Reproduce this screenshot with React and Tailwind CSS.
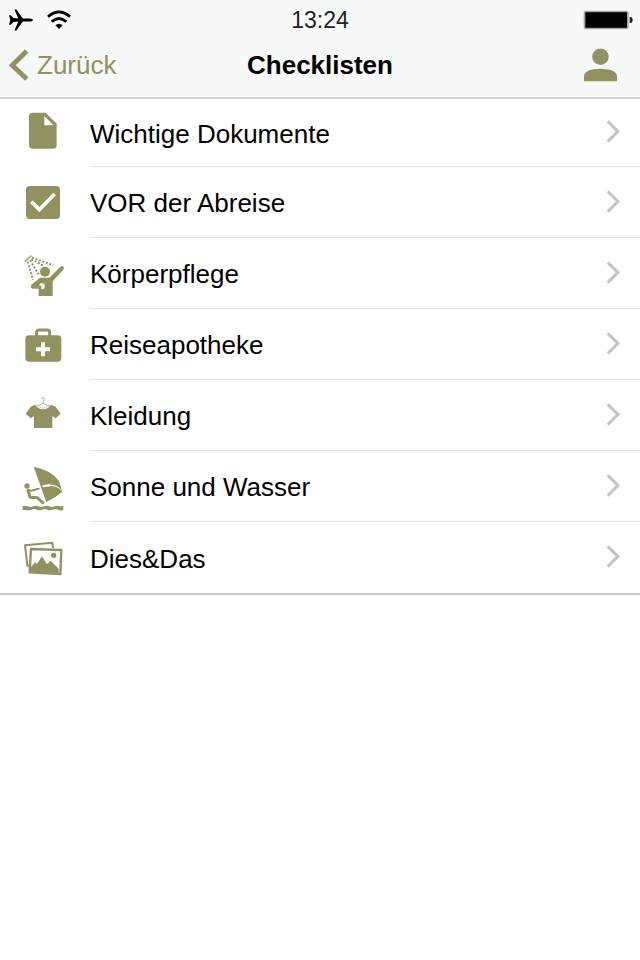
import { useState } from "react";

function DocumentIcon() {
  return (
    <svg viewBox="27 27 144 144" className="w-12 h-12" fill="currentColor" aria-hidden="true">
      <path
        fillRule="evenodd"
        d="M68 38H107L140 71V135Q140 146 129 146H68Q57 146 57 135V49Q57 38 68 38ZM103 48V76H131Z"
      />
    </svg>
  );
}

function CheckIcon() {
  return (
    <svg viewBox="27 27 144 144" className="w-12 h-12" aria-hidden="true">
      <rect x="48" y="48" width="102" height="99" rx="11" fill="currentColor" />
      <path d="M64 95L88 119L134 72" fill="none" stroke="white" strokeWidth="11" />
    </svg>
  );
}

function ShowerIcon() {
  return (
    <svg viewBox="27 30 144 144" className="w-12 h-12" fill="currentColor" aria-hidden="true">
      <path d="M43 62L63 45L66 49L47 67Z" opacity="0.8" />
      <g fill="none" stroke="currentColor" strokeWidth="6" strokeDasharray="6 5">
        <path d="M66 53L130 76" />
        <path d="M64 58L100 77" />
        <path d="M60 61L86 103" />
        <path d="M53 65L69 119" />
      </g>
      <circle cx="105" cy="95" r="15" />
      <path
        fillRule="evenodd"
        d="M64 134L90 113H118L151 80Q157 76 161 81Q163 85 159 90L128 124V168H86V146H66Q60 141 64 134ZM91 130L87 137H94V148H100Q104 147 104 142V135Q103 130 98 130Z"
      />
    </svg>
  );
}

function FirstAidIcon() {
  return (
    <svg viewBox="27 27 144 144" className="w-12 h-12" aria-hidden="true">
      <path d="M80 73V61Q80 54 87 54H112Q119 54 119 61V73" fill="none" stroke="currentColor" strokeWidth="9" />
      <rect x="46" y="70" width="108" height="79" rx="11" fill="currentColor" />
      <path d="M99 91V133M78 112H120" stroke="white" strokeWidth="12" />
    </svg>
  );
}

function ShirtIcon() {
  return (
    <svg viewBox="27 36 144 144" className="w-12 h-12" aria-hidden="true">
      <path
        d="M95 58Q95 53 99 53Q104 54 103 59Q99 62 99 69M99 69Q94 75 82 77M99 69Q105 75 117 77"
        fill="none"
        stroke="currentColor"
        strokeWidth="3"
        opacity="0.7"
      />
      <path
        d="M76 74Q82 87 99 88Q116 87 122 74L137 80L152 101L137 115L127 108V144H72V108L62 115L47 101L62 80Z"
        fill="currentColor"
      />
      <path d="M75 73Q82 83 99 84Q116 83 123 73" fill="none" stroke="currentColor" strokeWidth="2" opacity="0.5" />
    </svg>
  );
}

function SurfIcon() {
  return (
    <svg viewBox="27 24 144 144" className="w-12 h-12" fill="currentColor" aria-hidden="true">
      <path d="M71 35Q126 47 145 76Q151 86 156 111Q141 124 109 141Z" />
      <path d="M96 92Q122 82 145 96Q153 101 155 109Q142 92 122 94Q111 96 99 97Z" fill="white" />
      <circle cx="51" cy="93" r="8" />
      <g fill="none" stroke="currentColor" strokeLinecap="round" strokeLinejoin="round">
        <path d="M54 106L64 107L86 101" strokeWidth="6" />
        <path d="M54 106L60 127L82 128L98 143" strokeWidth="9" />
      </g>
      <path d="M38 154Q46 150 54 154T70 154T86 154T102 154T118 154T134 154T150 154L160 153V165Q151 168 144 164T128 164T112 164T96 164T80 164T64 164T48 164L38 166Z" />
    </svg>
  );
}

function PhotosIcon() {
  return (
    <svg viewBox="27 12 144 144" className="w-12 h-12" fill="none" stroke="currentColor" aria-hidden="true">
      <path d="M58 107L52 107L45 46L127 38L129 54" strokeWidth="6" strokeLinejoin="round" />
      <path d="M63 57L154 60L151 132L59 127Z" strokeWidth="7" strokeLinejoin="round" />
      <circle cx="131" cy="76" r="8" fill="currentColor" stroke="none" />
      <path d="M63 112L74 97L81 101L96 79L111 103L122 92L146 116V129L62 125Z" fill="currentColor" stroke="none" />
    </svg>
  );
}

const checklists = [
  { id: "documents", title: "Wichtige Dokumente", icon: DocumentIcon },
  { id: "before", title: "VOR der Abreise", icon: CheckIcon },
  { id: "care", title: "Körperpflege", icon: ShowerIcon },
  { id: "pharmacy", title: "Reiseapotheke", icon: FirstAidIcon },
  { id: "clothes", title: "Kleidung", icon: ShirtIcon },
  { id: "water", title: "Sonne und Wasser", icon: SurfIcon },
  { id: "misc", title: "Dies&Das", icon: PhotosIcon },
];

function StatusBar() {
  return (
    <div className="grid grid-cols-[1fr_auto_1fr] items-center h-10 px-[7px]">
      <div className="flex items-center gap-[14px] pl-0.5">
        <svg viewBox="0 0 75 66" className="w-6 h-6" fill="currentColor" aria-hidden="true">
          <path d="M0 18H5L14 27L29 28L17 0H23L43 28H64Q75 29 75 33Q75 37 64 38H43L23 66H17L29 38L14 39L5 48H0L4 33Z" />
        </svg>
        <svg viewBox="0 0 72 60" className="w-6 h-5" fill="none" stroke="currentColor" aria-hidden="true">
          <path d="M3 20Q36 -8 69 20" strokeWidth="8" />
          <path d="M14 35Q36 16 58 35" strokeWidth="8" />
          <path d="M25 46Q36 36 47 46L36 57Z" fill="currentColor" stroke="none" />
        </svg>
      </div>
      <span className="text-center text-[23px] leading-6 text-[#222222]">13:24</span>
      <svg viewBox="0 0 150 60" className="justify-self-end w-[50px] h-5" aria-hidden="true">
        <rect x="2" y="2" width="135" height="56" rx="7" fill="#a3a0a1" />
        <rect x="7" y="7" width="125" height="46" rx="3" fill="black" />
        <path d="M140 20Q149 21 149 30T140 40Z" fill="#222222" />
      </svg>
    </div>
  );
}

export default function App() {
  const [selected, setSelected] = useState(null);

  return (
    <div className="min-h-screen bg-white text-black font-['Liberation_Sans',Arial,sans-serif]">
      {/* Header */}
      <header className="bg-[#f7f9f8] border-b-2 border-[#d2d3d3]">
        <StatusBar />
        <nav className="grid grid-cols-[1fr_auto_1fr] items-center h-[57px] px-[9px] pb-2">
          <a href="#" className="flex items-center gap-2 text-[26px] leading-8 text-[#929160]">
            <svg viewBox="0 0 60 99" className="w-5 h-8" fill="none" stroke="currentColor" aria-hidden="true">
              <path d="M54 6L9 50L54 93" strokeWidth="15" />
            </svg>
            Zurück
          </a>
          <h1 className="text-[26px] leading-8 font-bold">Checklisten</h1>
          <button type="button" aria-label="Profil" className="justify-self-end mr-[14px] text-[#929160]">
            <svg viewBox="0 0 100 102" className="w-[33px] h-9" fill="currentColor" aria-hidden="true">
              <circle cx="50" cy="26" r="25" />
              <path d="M0 100V83Q5 62 50 62T100 83V100Z" />
            </svg>
          </button>
        </nav>
      </header>

      {/* Checklists */}
      <ul className="border-b-2 border-[#cbcbcd]">
        {checklists.map((item, i) => {
          const Icon = item.icon;
          return (
            <li key={item.id}>
              <button
                type="button"
                onClick={() => setSelected(item.id)}
                aria-pressed={selected === item.id}
                className={`flex items-stretch w-full pl-[19px] text-left ${i === 0 ? "h-[68px]" : "h-[71px]"}`}
              >
                <span className="flex items-center text-[#929160]">
                  <Icon />
                </span>
                <span
                  className={`flex flex-1 items-center justify-between ml-[23px] pr-5 ${
                    i < checklists.length - 1 ? "border-b border-[#e4e4e6]" : ""
                  }`}
                >
                  <span className="pt-0.5 text-[26px] leading-8">{item.title}</span>
                  <svg
                    viewBox="0 0 42 69"
                    className="w-[14px] h-[23px] mb-0.5"
                    fill="none"
                    stroke="#c4c4c8"
                    aria-hidden="true"
                  >
                    <path d="M5 4L36 34L5 65" strokeWidth="9" />
                  </svg>
                </span>
              </button>
            </li>
          );
        })}
      </ul>
    </div>
  );
}
